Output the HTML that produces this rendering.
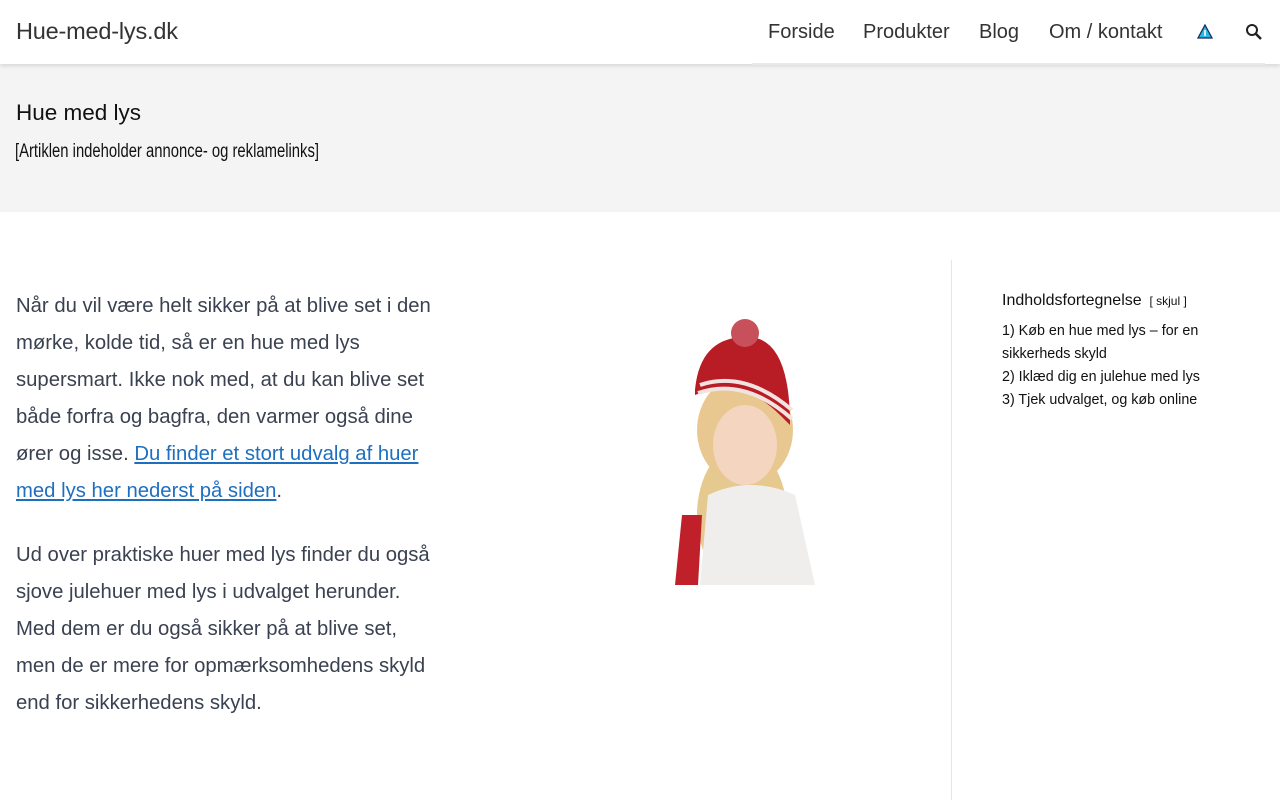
<!DOCTYPE html>
<html><head><meta charset="utf-8"><style>
*{margin:0;padding:0;box-sizing:border-box}
body{width:1280px;height:800px;overflow:hidden;background:#fff;font-family:"Liberation Sans",sans-serif;color:#3a4150;position:relative}
.hdr{position:absolute;left:0;top:0;width:1280px;height:64px;background:#fff;box-shadow:0 2px 4px rgba(0,0,0,.12);z-index:2}
.logo{position:absolute;left:16px;top:18px;font-size:23.5px;color:#333;letter-spacing:-0.2px}
.nav{position:absolute;top:21px;font-size:20px;color:#333;white-space:nowrap}
.band{position:absolute;left:0;top:64px;width:1280px;height:148px;background:#f4f4f4}
h1{position:absolute;left:16px;top:100px;font-size:22.5px;font-weight:normal;color:#111}
.sub{position:absolute;left:15px;top:141px;font-size:19px;color:#111;transform:scaleX(.78);transform-origin:left;white-space:nowrap}
.p{position:absolute;left:16px;font-size:20.3px;line-height:37px;white-space:nowrap;color:#3a4150}
a{color:#1e6fbf;text-decoration:underline}
.div{position:absolute;left:951px;top:260px;width:1px;height:540px;background:#e5e5e5}
.toc{position:absolute;left:1002px;font-size:14.3px;color:#111;white-space:nowrap}
</style></head><body>
<div class="hdr">
<div class="logo">Hue-med-lys.dk</div>
<div class="nav" style="left:768px">Forside</div>
<div class="nav" style="left:863px">Produkter</div>
<div class="nav" style="left:979px">Blog</div>
<div class="nav" style="left:1049px">Om / kontakt</div>
<svg style="position:absolute;left:1197px;top:24px" width="16" height="15" viewBox="0 0 16 15"><path d="M8 1 L15 14 L1 14 Z" fill="#2ab7e8" stroke="#103060" stroke-width="1.3"/><rect x="7.2" y="6" width="1.6" height="6" fill="#fff"/></svg>
<svg style="position:absolute;left:1245px;top:23px" width="18" height="18" viewBox="0 0 18 18"><circle cx="7" cy="7" r="5" fill="none" stroke="#222" stroke-width="2"/><path d="M10.5 10.5 L16 16" stroke="#222" stroke-width="2.5"/></svg>
</div>
<div style="position:absolute;left:752px;top:63px;width:513px;height:2px;background:#e8e8e8;z-index:3"></div>
<div class="band"></div>
<h1>Hue med lys</h1>
<div class="sub">[Artiklen indeholder annonce- og reklamelinks]</div>
<div class="p" style="top:288px">Når du vil være helt sikker på at blive set i den<br>mørke, kolde tid, så er en hue med lys<br>supersmart. Ikke nok med, at du kan blive set<br>både forfra og bagfra, den varmer også dine<br>ører og isse. <a>Du finder et stort udvalg af huer</a><br><a>med lys her nederst på siden</a>.</div>
<div class="p" style="top:537px">Ud over praktiske huer med lys finder du også<br>sjove julehuer med lys i udvalget herunder.<br>Med dem er du også sikker på at blive set,<br>men de er mere for opmærksomhedens skyld<br>end for sikkerhedens skyld.</div>
<svg style="position:absolute;left:660px;top:315px" width="180" height="270" viewBox="0 0 180 270">
<ellipse cx="82" cy="200" rx="45" ry="70" fill="#e6c98f"/>
<path d="M40 270 L48 180 Q90 160 135 180 L155 270 Z" fill="#f0eeec"/>
<path d="M15 270 L22 200 L42 200 L38 270 Z" fill="#c0202a"/>
<ellipse cx="85" cy="115" rx="48" ry="55" fill="#e8c890"/>
<ellipse cx="85" cy="130" rx="32" ry="40" fill="#f3d5c0"/>
<path d="M35 75 Q40 20 90 22 Q130 25 130 110 L120 100 Q80 60 35 80 Z" fill="#b81c24"/>
<path d="M40 70 Q85 55 132 95" stroke="#f3e3e0" stroke-width="4" fill="none"/>
<path d="M38 78 Q85 62 132 104" stroke="#f3e3e0" stroke-width="4" fill="none"/>
<circle cx="85" cy="18" r="14" fill="#c8505a"/>
</svg>
<div class="div"></div>
<div class="toc" style="top:292px;font-size:16px">Indholdsfortegnelse <span style="font-size:12px">&nbsp;[ skjul ]</span></div>
<div class="toc" style="top:320px;line-height:23px">1) Køb en hue med lys – for en<br>sikkerheds skyld<br>2) Iklæd dig en julehue med lys<br>3) Tjek udvalget, og køb online</div>
</body></html>
